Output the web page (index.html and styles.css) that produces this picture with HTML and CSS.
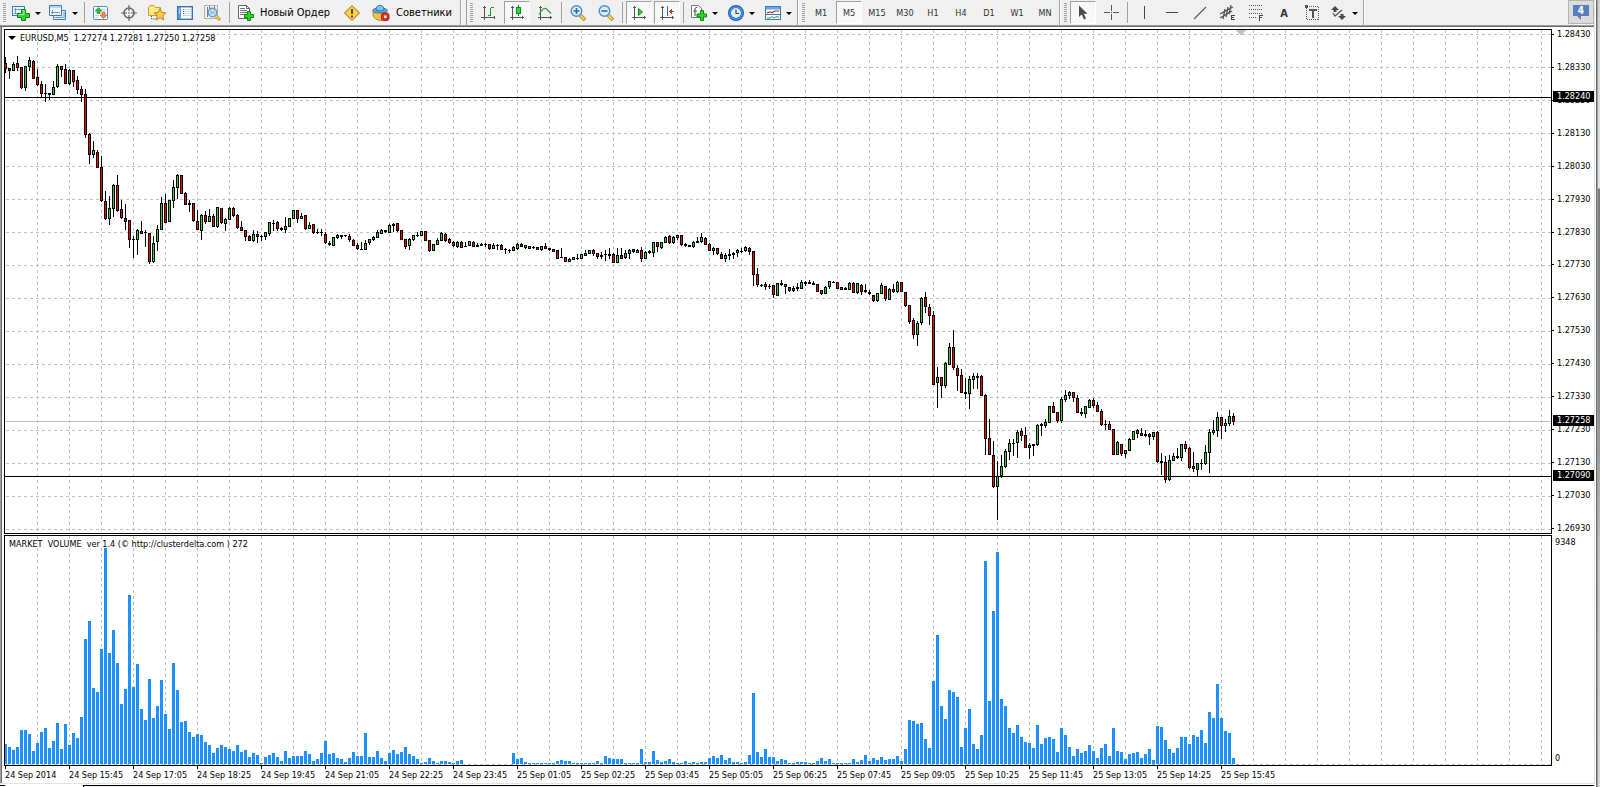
FILE: index.html
```html
<!DOCTYPE html>
<html lang="ru">
<head>
    <meta charset="UTF-8">
    <meta name="viewport" content="width=device-width, initial-scale=1.0">
    <title>EURUSD,M5</title>
    <link rel="stylesheet" href="styles.css">
</head>
<body>
    <div class="window">
        <div class="client">
            <header class="toolbars">
                <!-- Standard toolbar -->
                <div class="toolbar toolbar-standard">
                    <span class="grip"></span>
                    <button class="tool menu" aria-label="New chart">
                        <svg class="icon" viewBox="0 0 18 16"><rect x=".5" y="1.500" width="12" height="9" fill="#e8f3fb" stroke="#3f7cb5"/><path d="M2 4.500h8M2 8.500h5M3.500 3v6" stroke="#6f9cc4" fill="none"/><path d="M9.500 4.500h4v4h4v4h-4v3h-4v-3h-4v-4h4z" fill="#2fd32f" stroke="#0b8a12"/><path d="M10.500 5.500h1.500v4h-5" stroke="#a4f5a0" fill="none"/></svg>
                        <span class="caret"></span>
                    </button>
                    <button class="tool menu" aria-label="Profiles">
                        <svg class="icon" viewBox="0 0 18 16"><path d="M4.500 5.500h12v9h-12z" fill="#dcecf8" stroke="#3f7cb5"/><path d="M.5.5h12v10h-12z" fill="#f3f9fe" stroke="#3f7cb5"/><path d="M1 1h11v2H1z" fill="#b8d6ee"/><path d="M2 7.500h9M3.500 5v4M15 7v6M6 12.500h8" stroke="#6f9cc4"/></svg>
                        <span class="caret"></span>
                    </button>
                    <span class="separator"></span>
                    <button class="tool" aria-label="Market watch">
                        <svg class="icon" viewBox="0 0 16 16"><rect x=".5" y="1.500" width="14" height="13" rx="1" fill="#f7fbff" stroke="#4a8cc8"/><path d="M9 4.500h4M9 6.500h3M2 10.500h4M2 12.500h3" stroke="#b9d3e8"/><path d="M5.500 2.500l3.500 3.500h-2v2.500h-3v-2.500h-2z" fill="#2ebd2e" stroke="#148a18" stroke-width=".6"/><path d="M10.500 13.500l-3.500-3.500h2v-2.500h3v2.500h2z" fill="#f28a54" stroke="#d3491d" stroke-width=".6"/></svg>
                    </button>
                    <button class="tool" aria-label="Data window">
                        <svg class="icon" viewBox="0 0 16 16"><circle cx="8" cy="8" r="5" fill="none" stroke="#666" stroke-width="1.600"/><path d="M8 0v6M8 10v6M0 8h6M10 8h6" stroke="#666" stroke-width="1.200"/><path d="M8 7v2M7 8h2" stroke="#909090"/></svg>
                    </button>
                    <button class="tool" aria-label="Navigator">
                        <svg class="icon" viewBox="0 0 18 16"><path d="M.5 2.500l1.500-2h4l1.500 2h5v8h-12z" fill="#fde88a" stroke="#c9a12c"/><path d="M3.500 11v3h5" stroke="#555" stroke-dasharray="1 1" fill="none"/><path d="M12 3.500l1.800 4 4 .4-3 2.800.9 4.300-3.700-2.200-3.700 2.200.9-4.300-3-2.800 4-.4z" fill="#fbd03c" stroke="#b5822a"/></svg>
                    </button>
                    <button class="tool" aria-label="Terminal">
                        <svg class="icon" viewBox="0 0 16 16"><rect x=".7" y="1.700" width="14.600" height="12.600" fill="#fff" stroke="#2e72bd" stroke-width="1.400"/><path d="M1 2h3v12H1z" fill="#5c9bdb"/><path d="M2 4h1M2 6h1M2 8h1" stroke="#fff"/><path d="M6 4.500h8M6 6.500h8M6 8.500h8M6 10.500h8" stroke="#c3d5e8"/><path d="M6 4.500h1M6 6.500h1M6 8.500h1" stroke="#e04040"/></svg>
                    </button>
                    <button class="tool" aria-label="Strategy tester">
                        <svg class="icon" viewBox="0 0 18 16"><path d="M.5.5h13v13h-13z" fill="#f4f4ef" stroke="#b4b4a8"/><path d="M3.500 2v10M5.500 1v4M10.500 1v4" stroke="#777"/><circle cx="8.500" cy="7.500" r="4.300" fill="#c2e0f7" fill-opacity=".85" stroke="#6799c7" stroke-width="1.500"/><path d="M7 5.500v4M10 5.500v4M7 7.500h3" stroke="#8eb1cf"/><path d="M12 11l4 4" stroke="#b98a17" stroke-width="3"/><path d="M12 11l3.500 3.500" stroke="#f6d557" stroke-width="1.500"/></svg>
                    </button>
                    <span class="separator"></span>
                    <button class="tool labelled">
                        <svg class="icon" viewBox="0 0 16 16"><path d="M.5.5h8l3 3v10h-11z" fill="#fff" stroke="#666"/><path d="M8.500.5v3h3" fill="none" stroke="#666"/><path d="M2 3.500h5M2 5.500h7M2 7.500h7M2 9.500h4" stroke="#777"/><path d="M9.500 6.500h3v3h3v3h-3v3h-3v-3h-3v-3h3z" fill="#2fd32f" stroke="#0b8a12"/></svg>
                        Новый Ордер
                    </button>
                    <button class="tool" aria-label="MetaEditor">
                        <svg class="icon" viewBox="0 0 16 16"><path d="M8 .7l7.300 7.300-7.300 7.300-7.300-7.300z" fill="#f8d54a" stroke="#c2952a" stroke-width="1.200" stroke-linejoin="round"/><path d="M8 4v5M8 10.500v2" stroke="#5f4710" stroke-width="2"/></svg>
                    </button>
                    <button class="tool labelled">
                        <svg class="icon" viewBox="0 0 18 16"><path d="M1 7h13v3q-1 5-5 5.500-7-.5-8-5.500z" fill="#f3c04c" stroke="#bd8a2a"/><ellipse cx="8" cy="5.500" rx="7.500" ry="2.500" fill="#60abdc" stroke="#2c79b0"/><path d="M4 5q0-4.500 4-4.500t4 4.500q-4 2-8 0z" fill="#7cc3ea" stroke="#2c79b0"/><rect x="9.500" y="8" width="7.500" height="7.500" rx="2.500" fill="#e23022" stroke="#a91c12"/><path d="M12 10.500h2.500v2.500h-2.500z" fill="#fff"/></svg>
                        Советники
                    </button>
                </div>

                <!-- Charts toolbar -->
                <div class="toolbar toolbar-charts">
                    <span class="grip"></span>
                    <button class="tool" aria-label="Bar chart">
                        <svg class="icon crisp" viewBox="0 0 16 16"><path d="M3 1h1v14H3zM1 12h13v1H1zM2 2h3v1H2zM13 11h1v3h-1zM0 12h1v1H0z" fill="#555"/><path d="M9 3h1v8H9zM10 2h3v1h-3zM7 10h2v1H7z" fill="#1c9a26"/></svg>
                    </button>
                    <button class="tool pressed" aria-label="Candlesticks">
                        <svg class="icon crisp" viewBox="0 0 16 16"><path d="M3 1h1v14H3zM1 12h14v1H1zM2 2h3v1H2zM13 11h1v3h-1z" fill="#555"/><path d="M9 0h1v11H9z" fill="#0d7c16"/><path d="M7 2h5v7H7z" fill="#0d8c18"/><path d="M8 3h3v5H8z" fill="#36d840"/></svg>
                    </button>
                    <button class="tool" aria-label="Line chart">
                        <svg class="icon" viewBox="0 0 16 16"><path class="crisp" d="M3 1h1v14H3zM1 12h14v1H1zM2 2h3v1H2zM13 11h1v3h-1z" fill="#555"/><path d="M2 9.500q5-9 8-5l4 4" fill="none" stroke="#2fa038" stroke-width="1.200"/></svg>
                    </button>
                    <span class="separator"></span>
                    <button class="tool" aria-label="Zoom in">
                        <svg class="icon" viewBox="0 0 16 16"><path d="M10 10l5 5" stroke="#a97c17" stroke-width="3.400"/><path d="M10 10l4.500 4.500" stroke="#f6d557" stroke-width="1.800"/><circle cx="6.500" cy="6" r="5.300" fill="#d8edfb" stroke="#4d8ec9" stroke-width="1.400"/><path d="M3.500 6h6M6.500 3v6" stroke="#2b6ca9" stroke-width="1.600"/></svg>
                    </button>
                    <button class="tool" aria-label="Zoom out">
                        <svg class="icon" viewBox="0 0 16 16"><path d="M10 10l5 5" stroke="#a97c17" stroke-width="3.400"/><path d="M10 10l4.500 4.500" stroke="#f6d557" stroke-width="1.800"/><circle cx="6.500" cy="6" r="5.300" fill="#d8edfb" stroke="#4d8ec9" stroke-width="1.400"/><path d="M3.500 6h6" stroke="#2b6ca9" stroke-width="1.600"/></svg>
                    </button>
                    <span class="separator"></span>
                    <button class="tool pressed" aria-label="Auto scroll">
                        <svg class="icon" viewBox="0 0 16 16"><path class="crisp" d="M3 1h1v14H3zM1 12h14v1H1zM2 2h3v1H2zM13 11h1v3h-1z" fill="#555"/><path d="M7.500 3.500l4 3.500-4 3.500z" fill="#33c43b" stroke="#148a1c"/></svg>
                    </button>
                    <button class="tool pressed" aria-label="Chart shift">
                        <svg class="icon crisp" viewBox="0 0 16 16"><path d="M3 1h1v14H3zM1 12h14v1H1zM2 2h3v1H2zM13 11h1v3h-1z" fill="#555"/><path d="M8 1h1v10H8z" fill="#2a6fb0"/><path d="M10 6h5v1h-5zM11 5h1v3h-1zM12 4h1v5h-1z" fill="#c03a1c"/></svg>
                    </button>
                    <span class="separator"></span>
                    <button class="tool menu" aria-label="Indicators">
                        <svg class="icon" viewBox="0 0 16 16"><path d="M.5.5h7l3 3v9h-10z" fill="#fff" stroke="#777"/><path d="M6.500 2.500h-1q-1.500 0-1.500 1.500v7M2.500 6h3.500" fill="none" stroke="#444"/><path d="M9.500 5.500h3v3.500h3v3h-3v3.500h-3v-3.500h-3.500v-3h3.500z" fill="#2fd32f" stroke="#0b8a12"/></svg>
                        <span class="caret"></span>
                    </button>
                    <button class="tool menu" aria-label="Periods">
                        <svg class="icon" viewBox="0 0 16 16"><circle cx="8" cy="8" r="6.500" fill="#e4eef7" stroke="#1b5cb5" stroke-width="3"/><circle cx="8" cy="8" r="6.200" fill="none" stroke="#3f9bf0" stroke-width="1.400"/><path d="M8 4.500v4h3" fill="none" stroke="#444" stroke-width="1.200"/></svg>
                        <span class="caret"></span>
                    </button>
                    <button class="tool menu" aria-label="Templates">
                        <svg class="icon" viewBox="0 0 16 16"><rect x=".5" y="1.500" width="15" height="13" fill="#f6fafd" stroke="#3f7cb5"/><path d="M1 2h14v2.500H1z" fill="#67a9e0"/><path d="M2 8l3-1 2 .5 3-1.500h4" stroke="#a9302a" fill="none" stroke-width="1.200"/><path d="M1 9.500h14" stroke="#3f7cb5"/><path d="M2 13h3l2-1.500 2 1.500 3-1.500 2 1" stroke="#35a33c" fill="none"/></svg>
                        <span class="caret"></span>
                    </button>
                </div>

                <!-- Timeframes -->
                <div class="toolbar">
                    <span class="grip"></span>
                    <button class="tool">M1</button>
                    <button class="tool pressed">M5</button>
                    <button class="tool">M15</button>
                    <button class="tool">M30</button>
                    <button class="tool">H1</button>
                    <button class="tool">H4</button>
                    <button class="tool">D1</button>
                    <button class="tool">W1</button>
                    <button class="tool">MN</button>
                </div>

                <!-- Line studies -->
                <div class="toolbar">
                    <span class="grip"></span>
                    <button class="tool pressed" aria-label="Cursor">
                        <svg class="icon" viewBox="0 0 16 16"><path d="M4 .5v11.500l2.700-2.500 2.300 5 2-1-2.200-4.700h3.700z" fill="#4a4a4a"/></svg>
                    </button>
                    <button class="tool" aria-label="Crosshair">
                        <svg class="icon crisp" viewBox="0 0 16 16"><path d="M8 0h1v6H8zM8 9h1v6H8zM1 7h6v1H1zM10 7h6v1h-6zM8 7h1v1H8z" fill="#555"/></svg>
                    </button>
                    <span class="separator"></span>
                    <button class="tool" aria-label="Vertical line">
                        <svg class="icon crisp" viewBox="0 0 16 16"><path d="M8 1h1v13H8z" fill="#444"/></svg>
                    </button>
                    <button class="tool" aria-label="Horizontal line">
                        <svg class="icon crisp" viewBox="0 0 16 16"><path d="M2 7h12v1H2z" fill="#444"/></svg>
                    </button>
                    <button class="tool" aria-label="Trendline">
                        <svg class="icon" viewBox="0 0 16 16"><path d="M2 14l12-12" stroke="#555" stroke-width="1.100"/></svg>
                    </button>
                    <button class="tool" aria-label="Equidistant channel">
                        <svg class="icon" viewBox="0 0 16 16"><path d="M0 9l13-7M0 13l12-7M5 4l-2 10M8 2l-2 10M11 0l-2 9" stroke="#555" stroke-width="1.300"/><path class="crisp" d="M11 10h4v1h-3v1h2v1h-2v1h3v1h-4z" fill="#444"/></svg>
                    </button>
                    <button class="tool" aria-label="Fibonacci retracement">
                        <svg class="icon crisp" viewBox="0 0 16 16"><path d="M1 .5h14M1 4.500h14M1 8.500h14M1 12.500h8" stroke="#555" stroke-dasharray="1 1"/><path d="M11 10h4v1h-3v1h2v1h-2v3h-1z" fill="#444"/></svg>
                    </button>
                    <button class="tool letter">A</button>
                    <button class="tool" aria-label="Text label">
                        <svg class="icon crisp" viewBox="0 0 16 16"><path d="M2.500 1.500h12v13h-12z" fill="none" stroke="#555" stroke-dasharray="1 1"/><path d="M1 0h3v3H1zM5 4h8v2H5zM8 5h2v8H8z" fill="#555"/></svg>
                    </button>
                    <button class="tool menu" aria-label="Arrows">
                        <svg class="icon" viewBox="0 0 16 16"><path d="M4 1l4 4h-2.500v2h-3v-2h-2.500zM11 15l-4-4h2.500v-2h3v2h2.500z" fill="#4a4a4a"/><path d="M2 8l2 3 7-6" stroke="#555" fill="none" stroke-width="1.300"/></svg>
                        <span class="caret"></span>
                    </button>
                </div>

                <button class="alerts">
                    <svg class="bubble" viewBox="0 0 18 16"><path d="M1 0h16v11H9v4L5 11H1z" fill="#5b7db8"/></svg>
                    <span class="alerts-count">4</span>
                </button>
            </header>

            <main class="charts">
                <section class="pane price-pane">
                    <svg class="plot" id="price-plot"></svg>
                    <h1 class="pane-title"><span class="collapse"></span>EURUSD,M5&nbsp; 1.27274 1.27281 1.27250 1.27258</h1>
                </section>
                <div class="axis price-axis" id="price-axis"></div>
                <section class="pane volume-pane">
                    <svg class="plot" id="volume-plot"></svg>
                    <h2 class="pane-title">MARKET&nbsp; VOLUME&nbsp; ver 1.4 (© http://clusterdelta.com ) 272</h2>
                </section>
                <div class="axis volume-axis">
                    <span>9348</span>
                    <span>0</span>
                </div>
                <div class="time-axis" id="time-axis"></div>
            </main>
            <footer class="tabs"><span class="tab"></span><span class="tabs-rest"></span></footer>
        </div>
        <div class="edge"></div>
    </div>
    <script src="chart.js"></script>
</body>
</html>
```
FILE: styles.css
```css
* {
    box-sizing: border-box;
}
body {
    margin: 0;
    background: #fff;
    color: #000;
    font-family: "DejaVu Sans Condensed", "DejaVu Sans", Tahoma, sans-serif;
    font-size: 9px;
}
button {
    font: inherit;
    color: #333;
    background: none;
    border: 0;
    padding: 0;
}
.window {
    display: flex;
    height: 100vh;
}
.client {
    flex: 1;
    min-width: 0;
    display: flex;
    flex-direction: column;
}
.edge {
    width: 6px;
    border-left: 1px solid #e3e3e3;
    background: linear-gradient(to right, #fff 1px, #696969 1px, #696969 2px, #a0a0a0 2px, #a0a0a0 3px, transparent 3px),
        linear-gradient(#d0d0d0, #e4e4e4 188px, #7c7c7c 189px, #8a8a8a 400px, #c4c4c4 560px, #d8d8d8);
}

/* Toolbars */
.toolbars {
    display: flex;
    height: 27px;
    background: #f0f0f0;
    border-bottom: 1px solid #696969;
    box-shadow: inset 0 -1px #a0a0a0;
}
.toolbar {
    display: flex;
    align-items: center;
    height: 25px;
    padding-left: 3px;
    border-right: 1px solid #a0a0a0;
    box-shadow: 1px 0 #fff;
}
.toolbar + .toolbar {
    margin-left: 1px;
}
.toolbar-standard + .toolbar-charts {
    margin-left: 5px;
    border-left: 1px solid #a0a0a0;
}
.grip {
    width: 3px;
    height: 19px;
    margin-right: 2px;
    background: repeating-linear-gradient(#a0a0a0 0 1px, #f0f0f0 1px 2px);
}
.tool {
    display: flex;
    align-items: center;
    justify-content: center;
    width: 28px;
    height: 23px;
    padding-top: 1px;
}
.tool.menu {
    width: 37px;
    gap: 5px;
}
.tool.labelled {
    width: auto;
    padding: 0 8px 0 6px;
    gap: 6px;
    font-size: 11px;
    color: #000;
    white-space: nowrap;
}
.tool.pressed {
    background: #f8f8f8;
    border: 1px solid #a0a0a0;
    border-right-color: #fff;
    border-bottom-color: #fff;
    width: 26px;
    margin: 0 1px;
}
.tool.letter {
    font-size: 11px;
    font-weight: bold;
}
.icon {
    height: 16px;
    flex: none;
}
.crisp {
    shape-rendering: crispEdges;
}
.caret {
    border: 3px solid transparent;
    border-top-color: #000;
    border-bottom: 0;
}
.separator {
    width: 1px;
    height: 21px;
    margin: 0 2px;
    background: #a0a0a0;
}
.alerts {
    position: relative;
    width: 26px;
    height: 24px;
    margin-left: auto;
    background: #dcdcdc;
    border: 1px solid #b4b4b4;
}
.bubble {
    display: block;
    width: 18px;
    height: 16px;
    margin: 2px auto 0;
}
.alerts-count {
    position: absolute;
    top: 4px;
    left: 0;
    right: 0;
    color: #fff;
    font-size: 10px;
    font-weight: bold;
    line-height: 11px;
    text-align: center;
}

/* Chart area */
.charts {
    flex: 1;
    min-height: 0;
    display: grid;
    grid-template-columns: minmax(0, 1fr) 42px;
    grid-template-rows: minmax(0, 505fr) minmax(0, 231fr) 17px;
    row-gap: 1px;
    padding: 2px 0 0 2px;
    border-left: 1px solid #a0a0a0;
    box-shadow: inset 1px 0 #696969;
    margin-bottom: -1px;
}
.pane {
    position: relative;
    margin-left: 1px;
    border: 1px solid #000;
    overflow: hidden;
}
.plot {
    display: block;
    width: 100%;
    height: 100%;
    shape-rendering: crispEdges;
}
.pane-title {
    position: absolute;
    top: 4px;
    left: 2px;
    margin: 0;
    padding: 0 2px;
    background: #fff;
    font-size: 9px;
    font-weight: normal;
    line-height: 8px;
    white-space: nowrap;
}
.price-pane .pane-title {
    display: flex;
    align-items: center;
    gap: 4px;
    padding-left: 1px;
}
.collapse {
    border: 4px solid transparent;
    border-top-color: #000;
    border-bottom: 0;
}
.axis {
    position: relative;
    display: flex;
    flex-direction: column;
    justify-content: space-between;
    line-height: 11px;
}
.price-axis span {
    display: flex;
    align-items: center;
    gap: 3px;
}
.price-axis span::before {
    content: "";
    width: 2px;
    height: 1px;
    background: #000;
}
.price-axis .tag {
    position: absolute;
    left: 1px;
    right: 0;
    padding-left: 4px;
    background: #000;
    color: #fff;
}
.price-axis .tag::before {
    content: none;
}
.volume-axis {
    padding: 2px 0 2px 3px;
}
.time-axis {
    grid-column: 1 / -1;
    display: flex;
    margin-left: 2px;
    margin-top: -1px;
    overflow: hidden;
    line-height: 12px;
    white-space: nowrap;
}
.time-axis span {
    width: 64px;
    flex: none;
}
.time-axis span::before {
    content: "";
    display: block;
    width: 1px;
    height: 3px;
    background: #000;
}

/* Top edge of the chart tabs */
.tabs {
    display: flex;
    height: 4px;
    border-top: 1px solid #e3e3e3;
    padding-top: 1px;
}
.tab {
    width: 83px;
    border-left: 5px solid #000;
    height: 1px;
}
.tabs-rest {
    flex: 1;
    border-top: 1px solid #000;
    border-left: 1px solid #000;
    background: #f0f0f0;
}
```
FILE: chart.js
```js
const STEP = 4;              // pixels per bar
const GRID_X = 32;           // pixels between vertical grid lines
const TOP_PRICE = 1.2843;    // price of the first grid row
const TOP_ROW = 34;          // first grid row, ROWS_PER_GRID rows for every 0.00100
const ROWS_PER_GRID = 33;
const FIRST_ROW = 30;
const PRICE_ROWS = 503;
const VOLUME_ROWS = 229;

// Colour (r = down, g = up, d = doji), then rows of high, body top, body bottom, low
const candles = `
r57,63,69,73 r68,68,71,79 g62,64,71,71 r56,63,68,71 r67,67,88,89 g66,66,88,91 g57,60,67,71 r60,61,79,79
r69,77,85,86 r81,84,94,97 d84,93,94,102 d93,93,95,100 g81,87,95,95 g64,66,87,88 r66,66,70,77 r64,69,84,84
g69,70,84,85 r70,70,82,87 r76,80,90,94 r86,89,95,102 r89,94,135,138 r133,134,155,164 g141,150,155,158 r150,152,168,168
r156,167,201,202 r191,201,219,220 g196,208,219,225 g184,185,209,217 r175,185,211,212 r200,209,218,219 r204,218,222,230 r220,220,240,248
d236,239,240,258 g229,230,240,255 r221,231,234,234 d230,232,233,247 r233,233,262,264 g236,243,262,263 g225,229,242,251 g197,203,230,230
r194,203,223,223 g200,200,222,222 g180,187,201,208 g174,175,188,199 r175,175,194,194 r192,193,205,205 d200,203,205,212 r203,203,221,222
r210,221,230,230 g214,215,231,240 r211,215,222,224 g209,216,222,222 r214,216,227,227 g207,207,227,228 r208,208,223,224 g218,219,224,231
g207,208,220,220 r207,208,216,217 r214,215,228,229 r221,227,231,231 r230,230,237,241 r235,236,241,241 g230,234,241,242 r231,234,237,243
d235,236,237,241 g232,232,237,240 g222,222,234,236 d220,223,224,231 r221,222,229,231 d227,228,230,231 g217,226,230,233 g218,218,227,227
g210,210,219,219 r210,210,219,223 g213,216,219,219 r215,215,229,230 g222,225,229,229 r224,224,233,234 d229,232,233,234 d229,232,233,236
r232,234,243,244 d241,243,245,246 g237,237,246,246 g234,235,238,239 d235,235,237,239 d235,235,236,237 r234,236,240,242 r239,240,246,246
r243,245,249,250 d242,249,250,250 g240,243,250,250 g239,239,243,245 g236,237,240,241 g230,232,238,238 g229,230,234,234 d230,230,232,233
g224,225,233,233 d223,224,226,232 r223,223,231,232 r230,230,240,240 r239,239,247,249 g238,239,246,250 g235,235,240,241 d232,235,236,237
g231,231,236,236 r231,231,241,241 r240,240,251,252 g244,244,251,251 g238,240,245,245 g232,233,241,241 r233,234,241,242 r238,239,243,244
r241,242,246,247 g241,242,247,248 r241,242,248,248 d242,246,247,247 g241,241,246,246 r241,242,247,247 d243,245,247,247 d243,244,246,246
d243,244,245,247 r244,244,249,250 g243,245,249,249 d244,245,246,250 r244,245,250,250 d248,249,250,254 d249,250,251,253 g246,247,251,251
g243,244,249,250 r243,244,247,247 g245,245,248,249 r246,246,249,249 d246,247,248,249 r247,247,250,250 g246,246,250,251 r243,246,249,249
r248,248,250,251 r249,249,252,252 r250,250,259,259 d248,257,258,258 r257,257,262,262 g258,259,262,262 g257,257,260,260 d254,258,259,260
g254,254,259,259 g250,253,256,256 g250,250,254,254 r249,250,254,256 r253,253,257,259 d252,255,257,259 d250,254,255,261 d248,254,256,259
r253,254,263,263 g248,255,263,263 r248,255,259,259 g250,253,258,259 g249,250,254,259 r249,249,252,253 g249,250,253,253 r247,250,259,262
g251,252,259,259 d250,251,253,254 g242,242,253,257 r242,242,247,252 g242,242,248,249 g236,237,243,243 r235,236,243,244 g236,237,243,244
g235,235,238,240 r235,235,245,246 d243,244,246,247 d245,245,247,247 g241,242,247,248 d237,241,243,243 g233,237,242,243 r237,238,245,245
r243,244,251,251 g247,248,251,255 r248,248,254,255 r252,254,259,259 g253,255,259,262 d249,254,256,260 d252,253,255,259 g249,250,253,257
d248,251,252,253 g246,247,251,252 r247,248,252,255 r251,251,275,286 r268,274,285,287 d284,285,286,287 r282,284,287,290 d284,286,287,289
r285,285,295,298 g283,283,296,296 d280,283,285,286 r284,284,287,294 r287,287,291,292 g286,288,291,292 d283,287,289,291 g280,282,289,289
d281,282,284,286 d280,282,284,284 d281,283,285,285 r284,284,292,292 r290,290,294,295 g286,287,294,294 g281,281,287,289 d281,282,283,283
r282,282,289,289 g287,287,290,290 d287,288,290,290 g282,283,290,290 r282,283,293,293 g283,283,293,294 r284,285,292,295 d284,290,292,293
d290,292,294,295 r295,295,301,302 g293,293,301,302 g283,285,294,294 r286,286,299,301 g288,289,300,300 r284,289,292,293 g281,282,292,293
r282,282,292,292 r292,292,306,307 r305,305,322,324 r318,320,335,339 g321,323,335,346 g297,298,323,325 r292,297,307,313 r304,307,316,325
r311,315,385,385 g367,377,383,408 r377,377,386,398 g362,363,386,388 g343,347,365,365 r330,347,368,370 r365,368,376,391 r369,375,393,393
d378,392,394,399 g376,379,394,409 g373,376,380,389 d373,376,378,389 r375,376,396,396 r394,395,439,455 r419,438,455,455 r441,455,487,488
g461,476,487,520 g455,466,476,478 g449,451,467,468 g439,443,452,460 d439,443,444,456 g430,432,443,458 r428,431,436,441 r427,435,448,448
g443,445,448,459 d444,444,446,456 g424,425,445,446 d423,424,426,436 g419,422,426,428 g406,406,423,423 r402,406,413,413 r412,412,421,423
g397,399,421,423 g390,395,400,402 g391,392,396,399 r392,392,398,402 r395,398,413,413 d408,412,414,416 g406,406,414,418 g399,400,408,408
r398,400,406,408 r402,405,412,412 r409,411,425,426 d420,424,425,430 r421,424,430,430 r429,429,455,455 g441,442,455,455 r444,444,454,456
g450,450,454,458 g438,439,451,451 g431,431,440,440 r429,430,434,438 r428,433,436,436 d430,434,436,437 r433,434,437,445 g432,432,437,440
r431,432,462,463 d453,461,463,475 r456,462,480,483 g455,460,480,481 g453,456,461,461 d448,456,458,459 g444,444,458,461 r441,444,449,452
r447,448,468,469 r452,466,469,472 g463,463,470,476 d459,463,464,470 g445,452,464,465 g429,432,453,473 g420,430,433,435 g412,417,431,437
r417,417,426,439 g419,423,426,432 g410,416,424,426 r413,416,422,425
`.trim().split(/\s+/).map(item => [item[0], ...item.slice(1).split(',').map(Number)]);

const volumes = [
    20, 17, 14, 17, 34, 34, 30, 13, 21, 32, 36, 16, 23, 41, 15, 40, 19, 31, 26, 47,
    125, 143, 76, 72, 115, 217, 111, 134, 101, 60, 75, 169, 77, 100, 55, 44, 85, 46, 58, 84,
    50, 35, 101, 74, 42, 43, 32, 27, 30, 29, 22, 19, 11, 16, 19, 17, 15, 13, 19, 12,
    14, 7, 11, 9, 1, 7, 9, 11, 7, 3, 13, 6, 8, 8, 8, 13, 10, 3, 5, 11,
    23, 10, 11, 6, 5, 2, 6, 12, 8, 8, 31, 7, 7, 13, 6, 3, 11, 14, 10, 12,
    17, 10, 8, 5, 1, 2, 6, 3, 1, 3, 3, 2, 1, 3, 4, 0, 0, 0, 0, 0,
    0, 0, 0, 0, 0, 0, 0, 11, 5, 6, 2, 1, 1, 1, 1, 1, 1, 1, 3, 4,
    3, 3, 1, 1, 1, 1, 1, 1, 3, 1, 8, 6, 5, 5, 5, 1, 1, 1, 1, 15,
    2, 2, 13, 4, 2, 3, 5, 2, 1, 1, 3, 1, 2, 1, 2, 2, 6, 8, 6, 9,
    4, 6, 2, 2, 1, 2, 9, 71, 12, 7, 15, 7, 7, 3, 5, 4, 1, 1, 2, 2,
    2, 1, 1, 3, 6, 3, 5, 1, 1, 1, 1, 1, 5, 2, 4, 9, 3, 6, 4, 7,
    4, 5, 5, 8, 3, 15, 44, 43, 40, 41, 25, 16, 83, 129, 58, 45, 74, 72, 67, 17,
    36, 55, 20, 15, 29, 203, 63, 153, 212, 65, 58, 36, 31, 39, 27, 22, 21, 16, 39, 20,
    26, 27, 25, 12, 36, 29, 17, 8, 15, 11, 13, 19, 13, 6, 16, 20, 8, 36, 13, 12,
    5, 10, 11, 12, 6, 10, 15, 4, 38, 37, 24, 15, 11, 16, 27, 27, 20, 29, 27, 34,
    21, 52, 46, 80, 46, 33, 31, 6
];

const times = [
    '24 Sep 2014', '24 Sep 15:45', '24 Sep 17:05', '24 Sep 18:25', '24 Sep 19:45',
    '24 Sep 21:05', '24 Sep 22:25', '24 Sep 23:45', '25 Sep 01:05', '25 Sep 02:25',
    '25 Sep 03:45', '25 Sep 05:05', '25 Sep 06:25', '25 Sep 07:45', '25 Sep 09:05',
    '25 Sep 10:25', '25 Sep 11:45', '25 Sep 13:05', '25 Sep 14:25', '25 Sep 15:45'
];

const rect = (x, top, bottom, width) => `M${x} ${top}h${width}V${bottom}h${-width}z`;
const line = (y, color) => `<path d="M0 ${y}.5H9999" stroke="${color}"/>`;

function verticalGrid(width, height) {
    let d = '';
    for (let x = GRID_X; x < width; x += GRID_X) {
        d += `M${x}.5 0V${height}`;
    }
    return d;
}

function gridPath(d) {
    return `<path d="${d}" stroke="#c0c0c0" stroke-dasharray="3 3" fill="none"/>`;
}

function drawPrices() {
    const svg = document.getElementById('price-plot');
    const { width, height } = svg.getBoundingClientRect();
    const y = row => Math.round((row - FIRST_ROW) * height / PRICE_ROWS);
    const priceY = price => y(TOP_ROW + (TOP_PRICE - price) / 0.001 * ROWS_PER_GRID);

    let grid = verticalGrid(width, height);
    for (let i = 0; i < 16; i++) {
        grid += `M1 ${y(TOP_ROW + i * ROWS_PER_GRID)}.5H${width}`;
    }

    let black = '';
    const fill = { r: '', g: '' };
    candles.forEach(([color, high, top, bottom, low], i) => {
        const x = i * STEP;
        black += rect(x, y(high), y(low), 1) + rect(x - 1, y(top), y(bottom), 3);
        if (color !== 'd' && y(bottom) - y(top) > 2) {
            fill[color] += rect(x, y(top) + 1, y(bottom) - 1, 1);
        }
    });

    svg.innerHTML = gridPath(grid) +
        line(priceY(1.27258), '#c0c0c0') +
        `<path d="${black}"/><path d="${fill.r}" fill="#f00"/><path d="${fill.g}" fill="#32cd32"/>` +
        line(priceY(1.2824), '#000') +
        line(priceY(1.2709), '#000') +
        '<path d="M1230 0h11l-5 5h-1z" fill="#c0c0c0"/>';

    // Scale labels, with the levels marked over them
    let html = '';
    for (let i = 0; i < 16; i++) {
        html += `<span>${(TOP_PRICE - i * 0.001).toFixed(5)}</span>`;
    }
    [1.2824, 1.27258, 1.2709].forEach(price => {
        html += `<span class="tag" style="top: ${priceY(price) - 5}px">${price.toFixed(5)}</span>`;
    });
    document.getElementById('price-axis').innerHTML = html;
}

function drawVolumes() {
    const svg = document.getElementById('volume-plot');
    const { width, height } = svg.getBoundingClientRect();
    const base = Math.round(height) - 1;
    let bars = '';
    volumes.forEach((value, i) => {
        if (value) {
            bars += rect(i * STEP - 1, base - Math.round(value * height / VOLUME_ROWS), base, 3);
        }
    });
    svg.innerHTML = gridPath(verticalGrid(width, height) + `M1 ${base}.5H${width}`) +
        `<path d="${bars}" fill="#1e90ff"/>`;
}

function drawAll() {
    drawPrices();
    drawVolumes();
}

document.getElementById('time-axis').innerHTML = times.map(time => `<span>${time}</span>`).join('');
window.addEventListener('resize', drawAll);
drawAll();
```
